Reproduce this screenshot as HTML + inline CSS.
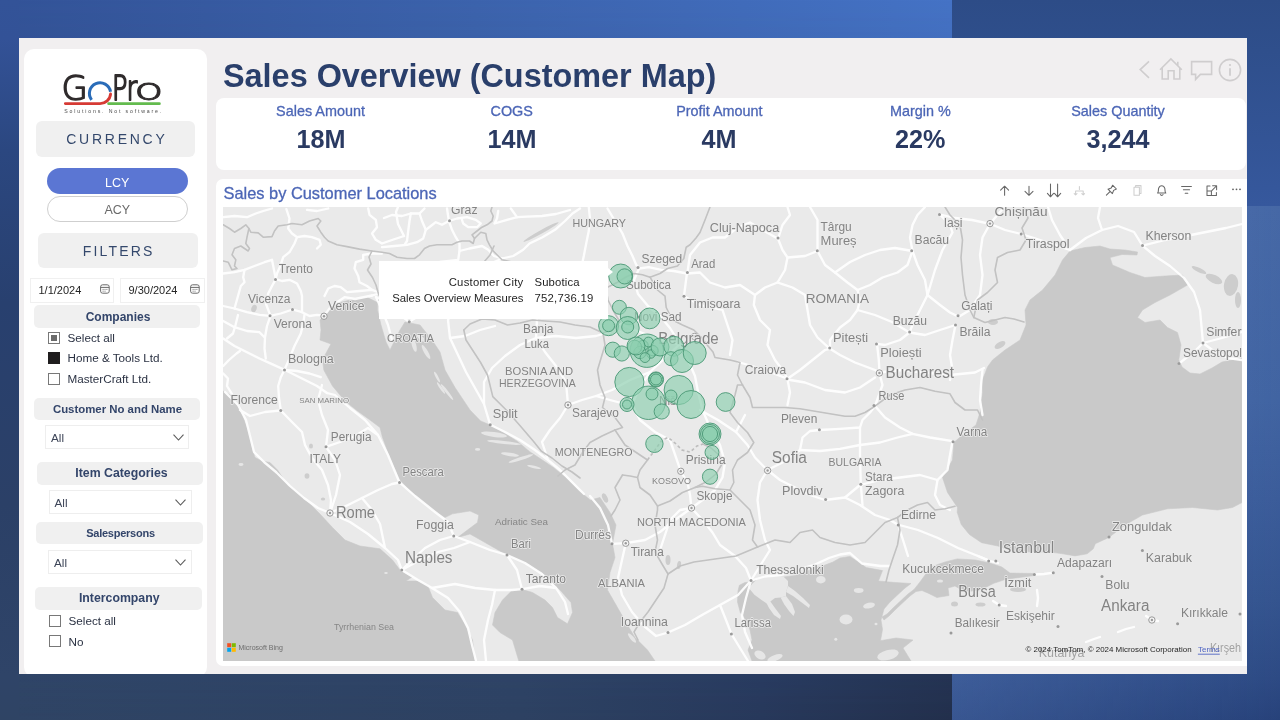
<!DOCTYPE html>
<html lang="en">
<head>
<meta charset="utf-8">
<title>Sales Overview (Customer Map)</title>
<style>
*{box-sizing:border-box;margin:0;padding:0}
html,body{width:1280px;height:720px;overflow:hidden}
body{font-family:"Liberation Sans",sans-serif;position:relative;background:#2c3f63}
.abs{position:absolute}
/* ---------- slide background ---------- */
.bgL{left:0;top:0;width:952px;height:720px;background:linear-gradient(to right,#335398 0%,#3c63ad 50%,#4573c6 100%)}
.bgL2{left:0;top:0;width:952px;height:720px;background:linear-gradient(to right,#2f4464 0%,#2d4161 55%,#27385a 80%,#222f4b 100%);
  -webkit-mask-image:linear-gradient(to bottom,transparent 0%,#000 100%);mask-image:linear-gradient(to bottom,transparent 0%,#000 100%)}
.bgR1{left:952px;top:0;width:328px;height:206px;background:linear-gradient(to bottom,#2d4c87 0%,#2f4f8c 25%,#36589d 100%)}
.bgLs{left:0;top:0;width:19px;height:720px;background:linear-gradient(to bottom,#335398 0%,#335297 5.3%,#2b4780 21%,#28406f 42%,#2b4067 70%,#2f4468 94%,#2f4464 100%)}
.bgR2{left:952px;top:205.5px;width:328px;height:514.5px;background:linear-gradient(to right,rgba(120,160,230,0.21) 0%,rgba(120,160,230,0) 100%),linear-gradient(to bottom,#4668a6 0%,#4164a2 37.8%,#3b5c9a 57%,#34548f 76.7%,#2d4a84 92%,#27427a 100%)}
/* ---------- panel ---------- */
.panel{left:19px;top:38px;width:1228px;height:636px;background:#f1eff0;overflow:hidden;will-change:transform}
.side{left:5px;top:11px;width:183px;height:627.5px;background:#fff;border-radius:10px}
.kpi{left:197px;top:59.5px;width:1029.5px;height:72.6px;background:#fff;border-radius:8px}
.mapcard{left:197px;top:141px;width:1031px;height:486.7px;background:#fff;border-radius:7px 0 0 7px}
.title{left:204px;top:17.5px;font-weight:700;font-size:32.4px;line-height:40px;color:#2a3f6b;white-space:nowrap;letter-spacing:0}
.klabel{-webkit-text-stroke:0.3px #4c66b6;font-size:14.4px;line-height:18px;color:#4c66b6;white-space:nowrap;text-align:center;width:200px;margin-left:-100px;top:64px}
.kval{font-weight:700;font-size:25.2px;line-height:30px;color:#2a3a62;white-space:nowrap;text-align:center;width:200px;margin-left:-100px;top:86px}
.maptitle{-webkit-text-stroke:0.3px #4c66b6;left:204.5px;top:145px;font-size:16.4px;line-height:20px;color:#4c66b6;white-space:nowrap}
.mapwrap{left:204px;top:169px;width:1019px;height:454px;overflow:hidden;background:#e9e9e9}
.mapsvg{display:block}
.tip{left:360px;top:222.5px;width:229px;height:58.5px;background:#fff}
.tip:after{content:"";position:absolute;right:-5px;top:7.8px;border-left:5px solid #fff;border-top:4px solid transparent;border-bottom:4px solid transparent}
.tip div{position:absolute;font-size:11.3px;line-height:14px;color:#1f1f1f;white-space:nowrap}
/* ---------- sidebar ---------- */
.hbox{background:#f0f0f0;border-radius:6px;text-align:center;color:#34486c}
.hbig{font-size:14px;letter-spacing:2.75px;padding-left:2.75px}
.hsm{font-weight:700;font-size:11.4px;color:#33456a;border-radius:5px}
.pill{left:22.5px;width:141.5px;border-radius:13px;text-align:center;font-size:12.5px;line-height:25px;height:25.5px}
.dt{height:25px;border:1px solid #f0f0f0;font-size:11px;line-height:23px;color:#252525;padding-left:8px;background:#fff}
.cb{width:12px;height:12px;border:1px solid #787878;background:#fff}
.ct{font-size:11.7px;line-height:14px;color:#2c3344;white-space:nowrap}
.dd{height:24px;border:1px solid #eeeeee;background:#fff;font-size:11.7px;line-height:23px;color:#3d4558;padding-left:5px}
svg.ico{position:absolute;overflow:visible}
</style>
</head>
<body>
<div class="abs bgL"></div><div class="abs bgL2"></div><div class="abs bgLs"></div>
<div class="abs bgR1"></div><div class="abs bgR2"></div>

<div class="abs panel">
  <!-- sidebar -->
  <div class="abs side">
    <!-- logo -->
    <svg class="ico" style="left:32px;top:17px" width="112" height="54" viewBox="56 66 112 54">
      <g font-family="'DejaVu Sans Light','DejaVu Sans',sans-serif" font-weight="200" font-size="33.9" fill="#2f2b2c" stroke="#2f2b2c" stroke-linejoin="round">
        <text transform="translate(61.4 100.1)" stroke-width="1.5">G</text>
        <text transform="translate(112.1 100.1) scale(0.753 1)" stroke-width="1.9">P</text>
        <text transform="translate(126.5 100.1) scale(0.77 1)" stroke-width="1.9">r</text>
        <text transform="translate(134.1 99.7) scale(1.43 0.9)" stroke-width="1">o</text>
      </g>
      <path d="M91.6 99.8 A10.6 10.6 0 1 1 110.5 91.8" fill="none" stroke="#2a6cb8" stroke-width="3" stroke-linecap="butt"/>
      <path d="M65.3 103.6 H100 A10.6 10.6 0 0 0 110.6 94" fill="none" stroke="#d63a34" stroke-width="2.8" stroke-linecap="round"/>
      <path d="M108.6 103.7 H159.4" fill="none" stroke="#63bb4e" stroke-width="2.7" stroke-linecap="round"/>
      <text x="64.2" y="112.6" font-family="'Liberation Sans', sans-serif" font-size="5.2" fill="#4a4a4a" letter-spacing="1.84">Solutions. Not software.</text>
    </svg>
    <div class="abs hbox hbig" style="left:12px;top:72.3px;width:159px;height:35.4px;line-height:37.6px">CURRENCY</div>
    <div class="abs pill" style="top:119px;background:#5b76d3;color:#fff;line-height:30px">LCY</div>
    <div class="abs pill" style="top:147px;background:#fff;color:#6a6a6a;border:1px solid #cfcfcf;line-height:27.5px">ACY</div>
    <div class="abs hbox hbig" style="left:13.5px;top:183.8px;width:160px;height:35.2px;line-height:37.6px;letter-spacing:2.2px;padding-left:2.2px">FILTERS</div>
    <div class="abs dt" style="left:5.5px;top:228.5px;width:84.5px">1/1/2024</div>
    <div class="abs dt" style="left:95.5px;top:228.5px;width:85px">9/30/2024</div>
    <svg class="ico" style="left:75.5px;top:235px" width="10" height="10" viewBox="0 0 10 10"><rect x="0.6" y="0.8" width="8.6" height="8.4" rx="2" fill="none" stroke="#6a6a6a" stroke-width="1"/><path d="M0.6 3.4H9.2" stroke="#6a6a6a" stroke-width="1"/><path d="M2.6 5.4h1M4.5 5.4h1M6.4 5.4h1M2.6 7.2h1M4.5 7.2h1" stroke="#6a6a6a" stroke-width="0.9"/></svg>
    <svg class="ico" style="left:166px;top:235px" width="10" height="10" viewBox="0 0 10 10"><rect x="0.6" y="0.8" width="8.6" height="8.4" rx="2" fill="none" stroke="#6a6a6a" stroke-width="1"/><path d="M0.6 3.4H9.2" stroke="#6a6a6a" stroke-width="1"/><path d="M2.6 5.4h1M4.5 5.4h1M6.4 5.4h1M2.6 7.2h1M4.5 7.2h1" stroke="#6a6a6a" stroke-width="0.9"/></svg>

    <div class="abs hbox hsm" style="left:9.5px;top:255.5px;width:166px;height:23px;line-height:24px;font-size:12px;padding-left:3px">Companies</div>
    <div class="abs cb" style="left:24px;top:282.5px"><div style="position:absolute;left:2px;top:2px;width:6px;height:6px;background:#6b6b6b"></div></div>
    <div class="abs ct" style="left:43.5px;top:282px">Select all</div>
    <div class="abs cb" style="left:24px;top:302.7px;background:#1f1d1e;border-color:#1f1d1e"></div>
    <div class="abs ct" style="left:43.5px;top:302.4px">Home &amp; Tools Ltd.</div>
    <div class="abs cb" style="left:24px;top:323.5px"></div>
    <div class="abs ct" style="left:43.5px;top:323px">MasterCraft Ltd.</div>

    <div class="abs hbox hsm" style="left:9.5px;top:349px;width:166px;height:22px;line-height:22.5px;padding-left:2px">Customer No and Name</div>
    <div class="abs dd" style="left:21px;top:375.8px;width:143.5px">All</div>
    <svg class="ico" style="left:148.5px;top:385px" width="11" height="7" viewBox="0 0 11 7"><path d="M0.5 0.6 L5.5 6 L10.5 0.6" fill="none" stroke="#5a5a5a" stroke-width="1.1"/></svg>

    <div class="abs hbox hsm" style="left:12.5px;top:413px;width:166px;height:23px;line-height:23.5px;font-size:12.3px;padding-left:4px">Item Categories</div>
    <div class="abs dd" style="left:24.5px;top:441px;width:143px">All</div>
    <svg class="ico" style="left:151px;top:450px" width="11" height="7" viewBox="0 0 11 7"><path d="M0.5 0.6 L5.5 6 L10.5 0.6" fill="none" stroke="#5a5a5a" stroke-width="1.1"/></svg>

    <div class="abs hbox hsm" style="left:11.5px;top:472.5px;width:167px;height:22px;line-height:22.5px;font-size:11px;letter-spacing:-0.25px;padding-left:3px">Salespersons</div>
    <div class="abs dd" style="left:24px;top:500.5px;width:143.5px">All</div>
    <svg class="ico" style="left:151px;top:509.5px" width="11" height="7" viewBox="0 0 11 7"><path d="M0.5 0.6 L5.5 6 L10.5 0.6" fill="none" stroke="#5a5a5a" stroke-width="1.1"/></svg>

    <div class="abs hbox hsm" style="left:10.5px;top:537.5px;width:167.5px;height:23px;line-height:23.5px;font-size:12.3px;padding-left:2px">Intercompany</div>
    <div class="abs cb" style="left:25px;top:565.5px"></div>
    <div class="abs ct" style="left:44.5px;top:565px">Select all</div>
    <div class="abs cb" style="left:25px;top:586px"></div>
    <div class="abs ct" style="left:44.5px;top:585.5px">No</div>
  </div>

  <!-- title + nav icons -->
  <div class="abs title">Sales Overview (Customer Map)</div>
  <svg class="ico" style="left:1115px;top:15px" width="112" height="32" viewBox="1134 53 112 32" fill="none" stroke="#cfcdce" stroke-width="1.6" stroke-linejoin="miter">
    <path d="M1149 61.4 L1140.2 69.6 L1149 77.8"/>
    <path d="M1160 69.8 L1170.9 58.9 L1181.8 69.8 M1162.2 68 V79 H1168.2 V70.8 H1174 V79 H1179.8 V68 M1177.8 65.6 V61.8"/>
    <path d="M1191.6 61.6 H1211.6 V74.4 H1200.4 L1195.6 79.4 V74.4 H1191.6 Z"/>
    <circle cx="1230" cy="70" r="10.6"/>
    <path d="M1230 68.2 V75.8" stroke-width="1.8"/><circle cx="1230" cy="65" r="1.1" fill="#cfcdce" stroke="none"/>
  </svg>

  <!-- KPI card -->
  <div class="abs kpi"></div>
  <div class="abs klabel" style="left:301.5px">Sales Amount</div><div class="abs kval" style="left:302px">18M</div>
  <div class="abs klabel" style="left:492.7px">COGS</div><div class="abs kval" style="left:493px">14M</div>
  <div class="abs klabel" style="left:700.4px">Profit Amount</div><div class="abs kval" style="left:700px">4M</div>
  <div class="abs klabel" style="left:901.3px">Margin %</div><div class="abs kval" style="left:901.3px">22%</div>
  <div class="abs klabel" style="left:1099px">Sales Quantity</div><div class="abs kval" style="left:1099px">3,244</div>

  <!-- map card -->
  <div class="abs mapcard"></div>
  <div class="abs maptitle">Sales by Customer Locations</div>
  <svg class="ico" style="left:971px;top:142px" width="256" height="24" viewBox="990 180 256 24" fill="none" stroke="#666666" stroke-width="1.05" stroke-linecap="round" stroke-linejoin="round">
    <path d="M1004.6 195.3 V186.4 M1000.6 190.2 L1004.6 186.2 L1008.6 190.2"/>
    <path d="M1029 186.2 V195.1 M1025 191.3 L1029 195.3 L1033 191.3"/>
    <path d="M1050.5 184 V196.6 M1047.4 193.4 L1050.5 196.8 L1053.6 193.4 M1057.6 184 V196.6 M1054.5 193.4 L1057.6 196.8 L1060.7 193.4"/>
    <g stroke="#cfcfcf"><path d="M1079.4 186.5 V189.5 M1075.6 194.6 V191 H1083.2 V194.6 M1074.2 193.6 L1075.6 195 L1077 193.6 M1081.8 193.6 L1083.2 195 L1084.6 193.6"/></g>
    <path d="M1112.6 185.2 L1116.4 189 L1113.6 190.4 L1112.4 193.6 L1108 189.2 L1111.2 188 Z M1110 191.6 L1106.4 195.2"/>
    <g stroke="#cfcfcf"><path d="M1134 187.2 H1139.4 V195.2 H1134 Z M1135.6 187 V185.6 H1141 V193.4 H1139.6"/></g>
    <path d="M1157.6 193 C1158.8 191.6 1158.2 189.6 1158.6 188.4 C1159.2 186.6 1160.4 185.8 1161.7 185.8 C1163 185.8 1164.2 186.6 1164.8 188.4 C1165.2 189.6 1164.6 191.6 1165.8 193 Z M1160.4 194.6 C1160.8 195.6 1162.6 195.6 1163 194.6"/>
    <path d="M1181.6 186.4 H1191.4 M1183.4 189.8 H1189.6 M1185.2 193.2 H1187.8"/>
    <path d="M1210 186 H1207 V195.4 H1216.4 V192.4 M1212.6 185.8 H1216.6 V189.8 M1216.4 186 L1211.6 190.8 M1207 191 H1211.4 V195.4"/>
    <g fill="#5f5f5f" stroke="none"><circle cx="1233" cy="189.3" r="0.9"/><circle cx="1236.5" cy="189.3" r="0.9"/><circle cx="1240" cy="189.3" r="0.9"/></g>
  </svg>
  <div class="abs mapwrap">
<svg class="mapsvg" width="1019" height="454" viewBox="223 207 1019 454">
<defs><filter id="soft" x="-2%" y="-2%" width="104%" height="104%"><feGaussianBlur stdDeviation="0.55"/></filter><filter id="soft2" x="-2%" y="-2%" width="104%" height="104%"><feGaussianBlur stdDeviation="0.35"/></filter></defs>
<rect x="223" y="207" width="1019" height="454" fill="#eaeaea"/>
<g fill="#c9c9c9" stroke="#c9c9c9" stroke-width="0.6" stroke-linejoin="round" filter="url(#soft2)">
<path d="M223.0,391.0 L230.0,395.0 L238.8,406.0 L245.0,422.5 L250.0,435.0 L252.5,450.0 L255.0,457.5 L262.0,461.0 L270.0,462.5 L277.5,470.0 L287.5,485.0 L300.0,495.0 L311.0,505.0 L320.0,514.0 L332.5,527.5 L345.0,540.0 L360.0,546.0 L380.0,548.8 L392.5,560.0 L400.0,570.0 L406.0,574.0 L412.0,577.0 L406.0,581.0 L418.0,581.0 L427.5,585.0 L432.5,597.5 L445.0,610.0 L457.5,612.5 L465.0,625.0 L472.5,640.0 L475.0,661.0 L223.0,661.0Z"/>
<path d="M323.8,316.0 L327.5,310.0 L340.0,302.5 L355.0,298.8 L367.5,297.5 L377.5,302.5 L377.5,310.0 L381.0,325.0 L386.0,342.0 L390.0,350.0 L395.0,340.0 L400.0,330.0 L405.0,322.0 L420.0,325.0 L432.0,340.0 L440.0,352.0 L445.0,370.0 L455.0,387.5 L470.0,410.0 L480.6,421.0 L490.4,425.0 L501.0,431.0 L517.2,441.2 L529.4,451.4 L541.6,459.5 L553.8,467.7 L566.0,477.8 L578.0,490.0 L590.3,500.0 L600.0,497.5 L610.0,512.5 L616.0,525.0 L612.5,543.8 L615.0,557.5 L610.0,572.5 L607.5,590.0 L617.5,607.5 L627.5,625.0 L635.0,637.5 L647.5,650.0 L655.0,661.0 L518.8,661.0 L512.5,640.0 L500.0,632.5 L492.5,625.0 L495.0,612.5 L502.5,600.0 L512.5,590.0 L522.0,589.5 L532.5,592.5 L545.0,600.0 L552.5,607.5 L557.5,617.5 L567.5,623.8 L572.5,612.5 L571.0,602.5 L560.0,590.0 L545.0,575.0 L525.0,562.5 L507.0,555.0 L485.0,542.5 L470.0,534.0 L457.5,537.5 L467.5,530.0 L477.5,522.5 L478.8,515.0 L470.0,511.0 L452.5,513.8 L445.0,517.5 L432.5,510.0 L415.0,495.0 L400.0,480.0 L390.0,457.5 L382.5,437.5 L380.0,427.5 L370.0,420.0 L357.5,411.0 L345.0,401.0 L332.5,386.0 L323.8,370.0 L322.5,360.0 L325.0,355.0 L331.0,344.0 L320.0,340.0 L321.0,330.0 L320.0,320.0Z"/>
<path d="M739.4,585.3 L738.0,591.0 L737.5,602.0 L740.3,612.5 L746.0,620.0 L750.0,630.0 L752.0,640.0 L748.0,650.0 L752.0,661.0 L911.0,661.0 L903.0,648.0 L913.0,640.0 L896.0,638.0 L880.5,640.7 L882.5,629.5 L881.0,620.0 L884.0,609.0 L890.0,602.0 L898.0,594.5 L905.0,588.0 L911.0,583.5 L895.0,582.5 L878.4,581.0 L882.5,570.6 L866.2,567.6 L850.0,556.4 L840.0,558.0 L833.0,562.0 L823.7,565.6 L815.0,568.0 L805.0,572.0 L795.0,575.5 L783.4,577.0 L770.0,577.5 L760.0,579.0 L752.0,582.0 L745.0,582.5Z"/>
<path d="M914.0,589.5 L920.0,582.0 L930.8,567.0 L945.0,562.0 L957.2,558.9 L975.5,560.0 L989.7,563.0 L1001.9,567.0 L1010.0,573.1 L1034.4,573.5 L1034.4,575.5 L1006.0,579.2 L993.8,583.3 L981.6,589.4 L969.4,591.4 L960.0,589.0 L955.0,586.0 L948.0,588.0 L949.0,595.5 L936.9,597.5 L928.8,593.4 L922.0,590.5 L916.0,591.5 L910.0,596.0 L903.0,602.5 L895.0,610.0 L889.0,616.0 L884.0,620.0 L882.0,617.0 L887.0,614.0 L893.0,608.0 L901.0,600.5 L908.0,594.0Z"/>
<path d="M982.5,380.0 L987.5,367.0 L992.5,360.0 L1005.0,350.0 L1020.0,340.0 L1026.0,325.0 L1025.0,310.0 L1030.0,300.0 L1042.5,290.0 L1055.0,275.0 L1062.5,260.0 L1070.0,251.0 L1085.0,247.5 L1100.0,246.0 L1110.0,249.0 L1125.0,250.0 L1137.5,252.0 L1137.0,255.0 L1122.0,254.5 L1110.0,257.5 L1112.5,265.0 L1130.0,272.5 L1145.0,277.5 L1165.0,276.0 L1182.5,275.0 L1187.5,285.0 L1170.0,295.0 L1155.0,302.5 L1142.5,310.0 L1137.5,317.5 L1145.0,322.5 L1160.0,320.0 L1167.5,327.5 L1177.5,332.5 L1181.0,345.0 L1178.8,360.0 L1182.0,367.0 L1190.0,373.0 L1200.0,374.0 L1212.0,368.0 L1222.0,362.0 L1242.0,358.0 L1242.0,502.5 L1232.5,507.5 L1217.5,510.0 L1192.5,507.5 L1167.5,508.8 L1142.5,515.0 L1125.0,525.0 L1108.8,537.5 L1095.3,543.7 L1093.3,548.8 L1087.2,553.8 L1075.0,555.9 L1062.8,553.8 L1050.0,552.0 L1030.0,552.0 L1010.0,550.0 L997.8,546.0 L981.6,542.7 L969.4,534.5 L961.2,524.4 L957.2,512.2 L957.5,507.5 L947.5,492.5 L942.5,477.5 L952.5,460.0 L953.8,442.5 L962.5,435.0 L976.0,425.0 L980.0,412.5 L982.5,392.5Z"/>
</g>
<path d="M752.5,583.4 L748.8,588.0 L754.4,594.7 L761.9,600.3 L767.5,604.0 L771.0,601.0 L775.0,598.0 L780.6,597.5 L786.0,596.0 L786.0,592.0 L788.0,586.0 L788.0,581.0 L783.4,576.5 L770.0,577.0 L758.0,578.5Z" fill="#e8e8e8"/>
<path d="M788.0,586.0 L795.0,591.0 L803.0,598.0 L810.0,605.0 L809.0,608.0 L801.0,602.0 L793.0,596.0 L786.0,592.0Z" fill="#e8e8e8"/>
<path d="M780.6,597.5 L786.0,596.0 L792.0,604.0 L795.0,612.0 L793.5,616.0 L789.0,611.0 L784.0,604.0Z" fill="#e8e8e8"/>
<path d="M766.0,602.0 L770.0,601.0 L775.0,608.0 L781.0,616.0 L780.0,619.0 L774.0,615.0 L769.0,608.0Z" fill="#e8e8e8"/>
<ellipse cx="858.7" cy="590.5" rx="4.8" ry="2.4" fill="#e6e6e6" transform="rotate(0 858.7 590.5)"/>
<ellipse cx="869" cy="605.6" rx="6" ry="2.8" fill="#e6e6e6" transform="rotate(-12 869 605.6)"/>
<ellipse cx="846" cy="619.5" rx="6.5" ry="5" fill="#e6e6e6" transform="rotate(0 846 619.5)"/>
<ellipse cx="835.8" cy="639.3" rx="1.5" ry="1.5" fill="#e6e6e6" transform="rotate(0 835.8 639.3)"/>
<ellipse cx="876" cy="624" rx="1.5" ry="1.2" fill="#e6e6e6" transform="rotate(0 876 624)"/>
<ellipse cx="888" cy="655" rx="11" ry="5" fill="#e6e6e6" transform="rotate(-15 888 655)"/>
<ellipse cx="940" cy="581" rx="3" ry="1.6" fill="#e6e6e6" transform="rotate(0 940 581)"/>
<ellipse cx="820.8" cy="579.7" rx="4.8" ry="3.7" fill="#e6e6e6" transform="rotate(0 820.8 579.7)"/>
<ellipse cx="494" cy="434.5" rx="13" ry="2.4" fill="#e6e6e6" transform="rotate(8 494 434.5)"/>
<ellipse cx="504" cy="442.5" rx="17" ry="1.6" fill="#e6e6e6" transform="rotate(6 504 442.5)"/>
<ellipse cx="510" cy="454.5" rx="9" ry="1.8" fill="#e6e6e6" transform="rotate(8 510 454.5)"/>
<ellipse cx="534" cy="467" rx="7" ry="1.3" fill="#e6e6e6" transform="rotate(14 534 467)"/>
<ellipse cx="477.6" cy="449.4" rx="2.6" ry="1.4" fill="#e6e6e6" transform="rotate(0 477.6 449.4)"/>
<ellipse cx="521" cy="458.5" rx="13" ry="1.6" fill="#e6e6e6" transform="rotate(-18 521 458.5)"/>
<ellipse cx="447" cy="392" rx="10" ry="1.4" fill="#e6e6e6" transform="rotate(52 447 392)"/>
<ellipse cx="441" cy="388" rx="7" ry="1.2" fill="#e6e6e6" transform="rotate(55 441 388)"/>
<ellipse cx="437" cy="377" rx="6" ry="1.3" fill="#e6e6e6" transform="rotate(62 437 377)"/>
<ellipse cx="426" cy="352" rx="8" ry="2" fill="#e6e6e6" transform="rotate(60 426 352)"/>
<ellipse cx="414" cy="345" rx="7" ry="2.2" fill="#e6e6e6" transform="rotate(75 414 345)"/>
<ellipse cx="421" cy="338" rx="5" ry="2" fill="#e6e6e6" transform="rotate(40 421 338)"/>
<ellipse cx="241" cy="464.5" rx="2.5" ry="1.4" fill="#e6e6e6" transform="rotate(0 241 464.5)"/>
<ellipse cx="632" cy="638" rx="6" ry="1.8" fill="#e6e6e6" transform="rotate(50 632 638)"/>
<ellipse cx="386" cy="573" rx="1.8" ry="1" fill="#e6e6e6" transform="rotate(0 386 573)"/>
<ellipse cx="760" cy="655" rx="6" ry="4" fill="#e6e6e6" transform="rotate(30 760 655)"/>
<ellipse cx="775" cy="658" rx="8" ry="3" fill="#e6e6e6" transform="rotate(-20 775 658)"/>
<ellipse cx="541" cy="232" rx="20" ry="1.8" fill="#cdcdcd" transform="rotate(-29 541 232)"/>
<ellipse cx="1018" cy="589.5" rx="8" ry="2.6" fill="#cdcdcd" transform="rotate(0 1018 589.5)"/>
<ellipse cx="980.5" cy="604.6" rx="5" ry="2" fill="#cdcdcd" transform="rotate(0 980.5 604.6)"/>
<ellipse cx="954.5" cy="604" rx="3.5" ry="2.5" fill="#cdcdcd" transform="rotate(0 954.5 604)"/>
<ellipse cx="254" cy="308.5" rx="2.6" ry="3.8" fill="#cdcdcd" transform="rotate(20 254 308.5)"/>
<ellipse cx="605" cy="498" rx="2.5" ry="5" fill="#cdcdcd" transform="rotate(-25 605 498)"/>
<ellipse cx="668" cy="560" rx="2.5" ry="5" fill="#cdcdcd" transform="rotate(0 668 560)"/>
<ellipse cx="679" cy="565" rx="2" ry="4" fill="#cdcdcd" transform="rotate(10 679 565)"/>
<ellipse cx="1231" cy="285" rx="7" ry="11" fill="#cdcdcd" transform="rotate(10 1231 285)"/>
<ellipse cx="1214" cy="279" rx="9" ry="4" fill="#cdcdcd" transform="rotate(25 1214 279)"/>
<ellipse cx="1199" cy="270" rx="8" ry="2.2" fill="#cdcdcd" transform="rotate(25 1199 270)"/>
<ellipse cx="1238" cy="300" rx="3" ry="8" fill="#cdcdcd" transform="rotate(0 1238 300)"/>
<ellipse cx="311" cy="446" rx="2" ry="2.6" fill="#cdcdcd" transform="rotate(0 311 446)"/>
<ellipse cx="323" cy="499" rx="2.2" ry="1.6" fill="#cdcdcd" transform="rotate(0 323 499)"/>
<ellipse cx="307" cy="476" rx="2.4" ry="2.8" fill="#cdcdcd" transform="rotate(0 307 476)"/>
<ellipse cx="993" cy="322" rx="5" ry="3" fill="#cdcdcd" transform="rotate(0 993 322)"/>
<ellipse cx="1000" cy="345" rx="6" ry="3" fill="#cdcdcd" transform="rotate(-30 1000 345)"/>
<g fill="none" stroke="#ffffff" stroke-width="2.3" stroke-linejoin="round" stroke-linecap="round" opacity="0.92" filter="url(#soft)">
<path d="M286.4,209.1 L289.5,218.5 L288.2,228.5 L292.0,233.5 L297.0,237.2 L294.5,243.5 L289.5,252.2 L283.2,257.2 L280.8,264.8 L277.0,273.5 L275.8,279.1 L272.0,286.0 L268.2,293.5 L266.0,304.0 L270.5,315.8"/>
<path d="M297.0,237.2 L304.5,236.0 L312.0,237.2 L319.5,239.8 L320.8,244.8 L317.0,248.5"/>
<path d="M223.2,273.5 L234.5,272.2 L244.5,269.8 L254.5,266.0 L264.5,262.2 L272.0,259.8 L273.2,266.0 L275.8,279.1"/>
<path d="M244.5,269.8 L243.2,277.2 L244.5,282.2 L240.8,286.0 L238.0,296.0 L234.5,308.5"/>
<path d="M275.8,279.1 L282.0,281.0 L289.5,279.8 L297.0,283.5 L300.8,291.0 L302.0,296.0 L302.0,312.2"/>
<path d="M223.2,217.2 L234.5,216.0 L247.0,217.2 L255.8,213.5 L263.2,211.0 L272.0,208.5"/>
<path d="M307.0,209.8 L317.0,211.0 L328.2,208.5"/>
<path d="M368.2,208.5 L369.5,214.8 L375.8,219.8 L377.0,227.2 L372.0,233.5 L375.8,239.8 L382.0,243.5 L392.0,240.0 L404.0,236.0"/>
<path d="M404.0,236.0 L398.0,224.0 L396.0,212.0 L398.0,207.0"/>
<path d="M382.0,253.5 L372.0,253.5 L363.2,254.8 L363.2,259.8 L355.8,262.2 L354.5,268.5 L358.2,276.0 L359.5,282.2 L367.0,286.0 L372.0,289.8"/>
<path d="M324.5,296.0 L328.2,288.5 L334.5,286.0 L340.8,287.2 L347.0,292.2 L359.5,291.0 L372.0,289.8 L382.0,293.5"/>
<path d="M223.2,338.5 L234.5,346.0 L247.0,352.2 L259.5,358.5 L272.0,364.1 L284.5,369.8 L297.0,376.0 L309.5,382.2 L317.0,386.0 L327.0,393.0"/>
<path d="M223.2,306.0 L234.5,308.5 L247.0,312.2 L259.5,314.8 L270.5,315.8 L280.8,313.5 L292.6,309.5 L302.0,312.2 L309.5,316.0 L317.0,314.8 L324.2,315.6"/>
<path d="M270.5,315.8 L267.0,326.0 L265.0,337.2 L264.5,348.5 L265.8,358.5"/>
<path d="M284.5,369.8 L289.5,358.5 L294.5,346.0 L300.8,333.5 L303.2,323.5 L304.5,314.8"/>
<path d="M284.5,369.8 L280.8,377.2 L278.2,386.0 L279.0,398.0 L280.8,410.5"/>
<path d="M284.5,369.8 L297.0,371.0 L309.5,373.5 L320.8,377.2"/>
<path d="M324.2,315.6 L329.5,308.5 L337.0,302.2 L344.5,297.2 L355.0,299.0 L372.0,295.5"/>
<path d="M223.2,366.0 L229.0,360.0 L236.5,353.5 L240.0,351.0"/>
<path d="M223.2,373.5 L228.0,378.5 L227.0,386.0 L232.0,394.0"/>
<path d="M238.0,315.0 L235.5,325.0 L233.0,333.5 L227.0,338.5"/>
<path d="M223.2,321.0 L234.5,327.2 L247.0,331.0 L259.5,332.2 L264.5,337.2"/>
<path d="M327.0,393.0 L335.0,395.0 L350.0,408.0 L365.0,420.0 L378.0,435.0 L388.0,455.0 L399.5,482.5 L415.0,496.0 L435.0,512.0 L448.0,522.0 L453.8,536.0 L470.0,542.0 L490.0,550.0 L507.0,555.0 L517.0,570.0 L522.0,589.2"/>
<path d="M225.0,392.0 L238.0,405.0 L246.0,420.0 L250.0,436.0 L254.0,452.0 L264.0,462.0 L276.0,472.0"/>
<path d="M280.8,410.5 L265.0,412.0 L250.0,416.0 L240.0,410.0"/>
<path d="M280.8,410.5 L292.0,422.0 L302.0,432.0 L305.0,445.0 L312.0,458.0 L322.0,470.0 L328.0,485.0 L331.0,500.0 L330.0,513.0"/>
<path d="M322.0,385.0 L318.0,400.0 L322.0,415.0 L328.0,430.0 L326.0,446.8 L335.0,460.0 L340.0,475.0 L336.0,495.0 L330.0,513.0"/>
<path d="M326.0,446.8 L340.0,442.0 L355.0,436.0 L368.0,428.0 L378.0,435.0"/>
<path d="M276.0,472.0 L290.0,486.0 L304.0,498.0 L318.0,508.0 L330.0,513.0"/>
<path d="M330.0,513.0 L350.0,522.0 L368.0,534.0 L385.0,548.0 L398.0,560.0 L401.8,570.0"/>
<path d="M330.0,513.0 L348.0,505.0 L362.0,498.0 L378.0,490.0 L392.0,484.0 L399.5,482.5"/>
<path d="M362.0,498.0 L372.0,510.0 L380.0,524.0 L385.0,548.0"/>
<path d="M401.8,570.0 L420.0,560.0 L438.0,552.0 L454.0,548.0 L470.0,542.0"/>
<path d="M401.8,570.0 L418.0,580.0 L432.0,588.0 L448.0,598.0 L460.0,612.0 L468.0,628.0 L472.0,645.0 L476.0,661.0"/>
<path d="M432.0,588.0 L455.0,584.0 L475.0,588.0 L495.0,590.0 L512.0,590.0 L522.0,589.2"/>
<path d="M453.8,536.0 L440.0,540.0 L425.0,548.0 L412.0,560.0 L401.8,570.0"/>
<path d="M507.0,555.0 L525.0,563.0 L542.0,574.0 L556.0,588.0 L565.0,602.0 L568.0,614.0"/>
<path d="M522.0,589.2 L540.0,586.0 L556.0,588.0"/>
<path d="M495.0,590.0 L492.0,605.0 L488.0,620.0 L484.0,640.0 L486.0,661.0"/>
<path d="M372.0,295.5 L392.0,290.0 L408.0,284.0 L425.0,282.0 L442.0,278.0 L458.0,275.0 L470.0,272.0"/>
<path d="M408.0,284.0 L425.0,270.0 L440.0,262.0 L458.2,259.8 L459.5,251.0 L459.5,243.5 L455.8,237.2 L452.0,229.8 L448.9,221.0 L447.0,208.5"/>
<path d="M448.9,221.0 L442.0,224.8 L435.8,222.2 L430.8,226.0 L425.8,229.8 L423.2,238.5 L417.0,242.2 L407.0,244.8 L394.5,246.0 L382.0,247.2"/>
<path d="M425.8,229.8 L422.0,221.0 L419.5,213.5 L424.5,208.5"/>
<path d="M410.8,213.5 L409.5,221.0 L408.2,231.0 L407.0,241.0 L404.5,244.8"/>
<path d="M419.5,213.5 L410.8,213.5 L402.0,216.0 L392.0,215.0 L384.0,218.0"/>
<path d="M448.9,221.0 L457.0,218.5 L467.0,217.2 L475.8,219.8 L480.8,223.5 L477.0,227.2 L468.2,227.2 L463.2,223.5 L462.0,219.8"/>
<path d="M498.2,211.0 L497.0,218.5 L494.5,223.5 L507.0,219.8 L517.0,217.2 L527.0,216.6 L542.0,216.0 L556.0,214.0 L570.0,210.0"/>
<path d="M510.8,208.5 L517.0,217.2"/>
<path d="M502.0,258.5 L513.2,256.0 L523.2,249.8 L529.5,243.5 L542.5,237.2 L555.0,229.8 L565.0,221.0 L572.5,213.5 L580.0,208.5"/>
<path d="M459.5,251.0 L469.5,248.5 L482.0,246.0 L488.2,249.8 L494.0,256.0 L502.0,258.5"/>
<path d="M470.0,272.0 L482.0,268.0 L492.0,263.0 L502.0,258.5"/>
<path d="M588.8,207.2 L590.0,218.5 L588.8,231.0 L586.2,243.5 L583.8,256.0 L582.5,262.0 L584.0,275.0 L590.0,288.0 L600.0,300.0 L610.0,320.0"/>
<path d="M607.5,208.5 L615.0,221.0 L622.5,233.5 L627.5,246.0 L632.5,256.0 L636.2,264.8 L639.1,268.5"/>
<path d="M639.1,268.5 L648.8,267.2 L661.2,269.8 L673.8,271.0 L686.9,273.5"/>
<path d="M639.1,268.5 L634.0,280.0 L638.0,294.0 L648.0,306.0 L660.0,316.0 L670.0,328.0 L680.0,344.0"/>
<path d="M686.9,273.5 L684.0,296.2 L700.0,305.0 L722.5,310.0 L727.5,325.0 L732.5,340.0 L730.0,355.0"/>
<path d="M686.9,273.5 L700.0,272.5 L710.0,282.5 L725.0,287.5 L740.0,285.0 L755.0,295.0"/>
<path d="M530.0,290.0 L535.0,305.0 L537.0,320.0 L536.0,338.0 L545.0,352.0 L556.0,366.0 L566.0,382.0 L568.0,405.0"/>
<path d="M568.0,405.0 L560.0,418.0 L550.0,430.0 L542.0,442.0 L548.0,460.0"/>
<path d="M568.0,405.0 L582.0,400.0 L596.0,396.0 L610.0,400.0 L625.0,404.0"/>
<path d="M536.0,338.0 L556.0,336.0 L576.0,338.0 L596.0,336.0 L610.0,332.0"/>
<path d="M470.0,272.0 L462.0,290.0 L455.0,305.0 L448.0,320.0 L450.0,338.0 L458.0,355.0 L466.0,372.0 L475.0,388.0 L484.0,404.0 L490.2,424.8"/>
<path d="M490.2,424.8 L505.0,432.0 L520.0,440.0 L535.0,450.0 L548.0,460.0 L560.0,470.0 L572.0,482.0 L584.0,494.0"/>
<path d="M409.2,321.8 L425.0,312.0 L440.0,300.0 L455.0,288.0 L470.0,272.0"/>
<path d="M376.0,297.0 L382.0,310.0 L388.0,325.0 L392.0,340.0"/>
<path d="M409.2,321.8 L396.0,312.0 L385.0,303.0 L376.0,297.0"/>
<path d="M536.0,338.0 L520.0,345.0 L505.0,356.0 L492.0,368.0 L484.0,382.0 L484.0,404.0"/>
<path d="M450.0,338.0 L465.0,336.0 L480.0,330.0 L495.0,326.0"/>
<path d="M540.0,268.0 L536.0,280.0 L530.0,290.0"/>
<path d="M470.0,272.0 L490.0,278.0 L510.0,284.0 L530.0,290.0 L550.0,298.0 L570.0,306.0 L590.0,314.0 L610.0,320.0 L630.0,328.0 L650.0,336.0 L668.0,342.0 L680.0,344.0"/>
<path d="M680.0,344.0 L688.0,360.0 L695.0,376.0 L698.0,392.0 L702.5,410.0 L710.0,427.5 L720.0,445.0 L725.0,462.5 L722.5,477.5 L715.0,490.0 L702.5,500.0 L691.5,508.0"/>
<path d="M680.8,471.3 L687.5,482.5 L690.0,495.0 L691.5,508.0"/>
<path d="M691.5,508.0 L680.0,510.0 L670.0,520.0 L665.0,535.0 L660.0,550.0"/>
<path d="M691.5,508.0 L702.5,520.0 L712.5,532.5 L720.0,545.0 L735.0,556.0 L746.0,568.0 L751.0,580.5"/>
<path d="M700.0,410.0 L718.0,420.0 L736.0,432.0 L745.0,415.0"/>
<path d="M736.0,432.0 L747.5,445.0 L755.0,457.5 L767.6,470.5"/>
<path d="M680.0,344.0 L665.0,358.0 L650.0,372.0 L640.0,388.0 L632.0,404.0 L640.0,420.0 L655.0,432.0 L670.0,440.0 L680.8,471.3"/>
<path d="M650.0,372.0 L630.0,380.0 L612.0,390.0 L596.0,396.0"/>
<path d="M691.5,508.0 L675.0,520.0 L660.0,532.0 L645.0,540.0 L625.8,543.2 L612.0,543.8"/>
<path d="M625.8,543.2 L622.0,560.0 L618.0,578.0 L622.0,595.0 L632.0,612.0 L644.0,626.0 L656.0,636.0 L668.0,632.5"/>
<path d="M668.0,632.5 L685.0,625.0 L702.0,615.0 L720.0,605.0 L738.0,595.0 L751.0,580.5"/>
<path d="M720.0,605.0 L726.0,620.0 L731.4,633.9 L740.0,648.0 L748.0,661.0"/>
<path d="M751.0,580.5 L746.0,598.0 L742.0,615.0 L745.0,632.0 L752.0,648.0"/>
<path d="M751.0,580.5 L765.0,576.5 L781.0,575.0 L800.0,569.0 L815.0,564.5 L829.0,558.0 L840.0,554.5 L850.0,553.0 L862.0,563.5 L880.5,566.0 L890.0,566.0"/>
<path d="M612.0,543.8 L608.0,525.0 L600.0,508.0 L590.0,496.0"/>
<path d="M778.0,238.8 L782.5,250.0 L787.5,257.5 L805.0,256.0 L817.5,251.0"/>
<path d="M787.5,257.5 L785.0,270.0 L777.5,282.5 L765.0,287.5 L755.0,295.0 L753.8,305.0 L760.0,320.0 L770.0,330.0 L767.5,345.0 L775.0,360.0 L782.5,370.0 L787.5,378.8"/>
<path d="M777.5,282.5 L792.5,287.5 L805.0,295.0 L807.5,310.0 L810.0,325.0 L817.5,337.5 L830.0,348.8 L840.0,355.0 L855.0,362.5 L875.0,370.0 L879.5,372.5"/>
<path d="M817.5,251.0 L825.0,265.0 L835.0,272.5 L847.5,282.5 L857.5,290.0 L860.0,300.0 L857.5,310.0 L850.0,320.0 L840.0,327.5 L830.0,340.0 L830.0,348.8"/>
<path d="M857.5,290.0 L870.0,285.0 L882.5,277.5 L897.5,272.5 L907.5,265.0 L912.5,251.0"/>
<path d="M912.5,251.0 L910.0,237.5 L912.5,225.0 L917.5,215.0 L925.0,207.0"/>
<path d="M912.5,251.0 L917.5,265.0 L925.0,280.0 L927.5,295.0 L920.0,310.0 L912.5,325.0 L909.5,332.5 L900.0,340.0 L885.0,345.0 L877.0,343.8 L878.8,360.0 L879.5,372.5"/>
<path d="M927.5,295.0 L940.0,305.0 L950.0,312.5 L957.5,316.2"/>
<path d="M940.0,214.5 L950.0,225.0 L952.5,232.5 L942.5,250.0 L935.0,270.0 L927.5,295.0"/>
<path d="M909.5,332.5 L925.0,335.0 L940.0,330.0 L955.5,325.0"/>
<path d="M879.5,372.5 L900.0,370.0 L925.0,372.5 L950.0,375.0 L975.0,372.5 L984.0,368.0"/>
<path d="M955.5,325.0 L952.5,340.0 L950.0,355.0 L952.5,370.0 L950.0,380.0"/>
<path d="M990.0,223.8 L982.5,237.5 L980.0,255.0 L982.5,275.0 L980.0,295.0 L970.0,310.0 L960.0,316.0"/>
<path d="M778.0,238.8 L762.5,230.0 L750.0,222.5 L737.5,227.5 L725.0,237.5 L712.5,237.5 L700.0,242.5 L690.0,255.0 L687.4,272.6"/>
<path d="M778.0,238.8 L782.5,225.0 L790.0,215.0 L787.5,207.0"/>
<path d="M810.0,207.0 L817.5,220.0 L817.5,251.0"/>
<path d="M787.5,378.8 L800.0,370.0 L812.5,360.0 L825.0,350.0 L830.0,348.8"/>
<path d="M787.5,379.5 L805.0,382.5 L825.0,390.0 L845.0,392.5 L860.0,387.5 L875.0,377.5"/>
<path d="M787.5,379.5 L790.0,392.5 L787.5,405.0"/>
<path d="M787.5,378.8 L770.0,372.0 L752.0,366.0 L738.0,362.0"/>
<path d="M879.5,373.8 L882.5,385.0 L875.0,406.0"/>
<path d="M982.5,370.0 L981.0,385.0 L980.0,400.0 L982.5,415.0"/>
<path d="M857.5,310.0 L875.0,315.0 L892.0,322.0 L909.5,332.5"/>
<path d="M835.0,272.5 L850.0,262.0 L865.0,255.0 L880.0,250.0 L895.0,248.0 L912.5,251.0"/>
<path d="M767.5,470.0 L782.5,462.5 L800.0,450.0 L802.5,437.5 L810.0,431.0 L820.0,430.0 L840.0,428.8 L860.0,427.5 L862.5,420.0 L870.0,412.5 L875.0,406.0"/>
<path d="M800.0,450.0 L820.0,451.0 L840.0,448.8 L860.0,445.0 L880.0,442.5 L897.5,437.5 L912.5,433.8 L930.0,437.5 L952.5,441.2"/>
<path d="M875.0,406.0 L885.0,417.5 L900.0,427.5 L912.5,433.8"/>
<path d="M767.5,470.0 L780.0,480.0 L795.0,487.5 L810.0,495.0 L825.0,500.0 L845.0,497.5 L860.0,485.0 L880.0,480.0 L900.0,477.5 L920.0,475.0 L937.5,480.0"/>
<path d="M845.0,497.5 L860.0,505.0 L875.0,515.0 L890.0,520.0 L897.5,524.5 L918.0,530.0 L938.0,538.0 L958.0,548.0 L978.0,556.0 L990.0,561.0"/>
<path d="M860.0,427.5 L860.0,445.0 L860.0,455.0 L860.8,484.2 L862.5,505.0"/>
<path d="M767.5,470.0 L760.0,482.5 L757.5,500.0 L760.0,520.0 L765.0,540.0 L770.0,550.0 L760.0,566.0 L751.0,580.5"/>
<path d="M952.5,441.2 L950.0,455.0 L947.5,470.0 L937.5,480.0 L935.0,495.0 L940.0,505.0 L950.0,510.0"/>
<path d="M978.0,556.0 L990.0,561.0 L998.0,563.0"/>
<path d="M1034.4,574.5 L1044.0,574.0 L1053.3,572.7"/>
<path d="M1037.0,590.0 L1038.0,598.0 L1037.0,606.0"/>
<path d="M993.0,601.0 L999.2,605.0 L1006.0,606.0"/>
<path d="M1146.0,616.0 L1151.9,620.0 L1158.0,621.0"/>
<path d="M1118.0,632.0 L1126.0,629.0 L1134.0,627.0"/>
<path d="M1086.0,642.0 L1094.0,639.0 L1100.0,637.0"/>
<path d="M898.2,525.0 L903.0,540.0 L908.0,556.0"/>
<path d="M990.0,223.8 L1005.0,230.0 L1021.2,234.0 L1040.0,240.0 L1058.0,246.0 L1070.0,250.0"/>
<path d="M1070.0,250.0 L1086.0,238.0 L1102.0,230.0 L1118.0,226.0 L1134.0,232.0 L1142.5,245.6"/>
<path d="M1142.5,245.6 L1165.0,240.0 L1186.0,236.0 L1206.0,232.0 L1226.0,228.0 L1242.0,224.0"/>
<path d="M1142.5,245.6 L1155.0,256.0 L1170.0,266.0 L1184.0,278.0 L1194.0,292.0 L1200.0,310.0 L1203.0,343.0"/>
<path d="M1203.0,343.0 L1194.0,352.0 L1186.0,358.0 L1179.0,363.6"/>
<path d="M1203.0,343.0 L1222.0,338.0 L1242.0,332.0"/>
<path d="M1203.0,343.0 L1215.0,352.0 L1228.0,358.0 L1242.0,360.0"/>
<path d="M940.0,214.5 L955.0,218.0 L972.0,220.0 L990.0,223.8"/>
<path d="M990.0,223.8 L1000.0,212.0 L1005.0,207.0"/>
<path d="M1070.0,250.0 L1060.0,235.0 L1052.0,220.0 L1048.0,207.0"/>
<path d="M1102.0,230.0 L1098.0,218.0 L1100.0,207.0"/>
</g>
<g fill="none" stroke="#c2c2c2" stroke-width="1.6" stroke-linejoin="round" stroke-linecap="round" filter="url(#soft)">
<path d="M223.2,224.8 L229.5,228.5 L234.5,232.2 L240.8,228.5 L245.8,224.8 L248.9,228.5 L250.8,232.2 L258.2,232.9 L263.2,237.2 L272.0,236.6 L274.5,231.0 L278.2,226.0 L287.0,224.8 L292.0,223.5 L302.0,224.8 L309.5,221.0 L318.2,218.5 L320.8,221.0 L317.0,226.0 L320.8,232.2 L324.5,237.2 L328.2,241.0 L337.0,244.8 L347.0,246.6 L359.5,249.1 L372.0,251.0 L382.0,252.2 L389.5,253.5 L397.0,257.2 L407.0,258.5 L414.5,258.5 L419.5,254.8 L424.5,248.5 L429.5,246.0 L437.0,244.8 L444.5,244.8 L452.0,244.8 L457.0,242.2 L462.0,241.0 L469.5,241.0 L473.2,243.5 L474.5,238.5 L472.0,234.8 L477.0,231.0 L482.0,227.2 L487.0,224.8 L492.0,221.0 L493.2,216.0 L490.8,211.0 L492.0,207.0"/>
<path d="M474.5,238.5 L480.8,232.2 L485.8,233.5 L487.0,239.8 L489.5,244.8 L493.2,251.0 L498.2,256.0 L502.0,259.8 L512.0,262.0"/>
<path d="M248.9,228.5 L247.0,237.2 L245.8,243.5 L249.5,248.5 L248.2,251.0 L240.8,246.0 L234.5,248.5 L232.0,254.8 L235.8,259.8 L234.5,266.0 L237.0,268.5 L232.0,269.8 L228.2,262.2 L223.2,261.0"/>
<path d="M372.0,251.0 L369.0,257.0 L371.0,264.0 L367.5,270.0 L372.5,277.5 L376.0,285.0 L378.8,295.0"/>
<path d="M379.0,300.0 L390.0,305.0 L400.0,300.0 L412.0,304.0 L425.0,300.0 L438.0,297.0 L450.0,292.0 L462.0,286.0 L470.0,278.0 L480.0,272.0 L484.0,262.0 L490.0,255.0 L494.0,246.0"/>
<path d="M512.0,262.0 L520.0,262.0 L535.0,268.0 L550.0,276.0 L565.0,284.0 L580.0,288.0 L595.0,290.0 L606.0,288.0"/>
<path d="M606.0,288.0 L618.0,282.0 L626.0,277.0 L633.8,273.5 L642.5,274.8 L650.0,277.2"/>
<path d="M650.0,277.2 L660.0,273.5 L667.5,268.5 L677.5,266.0 L683.8,258.5 L686.2,247.2 L690.0,244.8 L696.0,238.0 L700.0,232.5 L705.0,220.0 L710.0,207.0"/>
<path d="M650.0,277.2 L657.5,290.0 L665.0,296.2 L666.2,307.5 L672.5,320.0 L682.5,325.0 L693.8,330.0 L702.0,338.0 L708.0,346.0 L713.0,352.0 L715.0,357.5 L730.0,360.0 L740.0,362.5 L737.5,375.0 L742.5,385.0"/>
<path d="M606.0,288.0 L608.0,300.0 L614.0,312.0 L620.0,322.0 L612.0,330.0 L603.0,333.0"/>
<path d="M463.8,330.0 L470.0,324.0 L482.0,319.0 L495.0,320.0 L507.5,325.0 L520.0,323.0 L532.5,320.0 L545.0,321.0 L560.0,322.0 L575.0,325.0 L590.0,327.0 L603.0,333.0"/>
<path d="M463.8,330.0 L466.0,340.0 L472.5,350.0 L480.6,362.5 L487.5,375.0 L492.8,396.6 L507.0,410.8 L521.2,427.0 L533.4,441.2 L541.6,451.4 L552.0,458.0 L562.0,466.0 L572.0,472.0 L580.0,478.0"/>
<path d="M603.0,333.0 L605.0,345.0 L600.5,360.0 L597.5,370.0 L600.0,385.0 L605.0,397.5 L602.5,407.5 L615.0,417.5 L622.5,427.5 L615.0,430.0"/>
<path d="M615.0,430.0 L602.0,436.0 L590.0,442.5 L582.5,452.5 L575.0,465.0 L565.0,470.0 L558.0,476.0"/>
<path d="M615.0,430.0 L625.0,445.0 L640.0,455.0 L647.5,460.0 L640.0,470.0 L637.5,477.5 L630.0,476.0 L622.5,475.0"/>
<path d="M622.5,475.0 L615.0,487.5 L620.0,500.0 L615.0,510.0 L611.0,516.0"/>
<path d="M637.5,477.5 L640.0,487.5 L650.0,495.0 L657.5,506.0 L670.0,501.0 L682.5,492.5 L695.0,487.5 L702.5,486.2 L715.0,488.8 L730.0,490.0"/>
<path d="M695.0,487.5 L706.0,482.0 L716.0,474.0 L722.0,464.0 L719.0,455.0 L711.0,448.0 L703.0,444.0"/>
<path d="M742.5,385.0 L737.5,385.0 L735.0,395.0 L730.0,412.5 L737.5,422.5 L747.5,432.5 L753.8,442.5 L747.5,452.5 L737.5,460.0 L732.5,470.0 L733.8,482.5 L730.0,490.0"/>
<path d="M742.5,385.0 L750.0,397.5 L752.5,407.5 L770.0,407.5 L785.0,407.5 L800.0,408.8 L815.0,411.2 L830.0,413.8 L845.0,416.2 L855.0,416.2 L865.0,412.5 L875.0,406.2 L890.0,395.0 L905.0,390.0 L920.0,387.5 L935.0,391.2 L950.0,393.8 L955.0,402.5 L965.0,410.0 L977.5,410.0 L982.5,420.0"/>
<path d="M730.0,490.0 L740.0,500.0 L750.0,510.0 L755.0,525.0 L752.5,540.0 L757.5,547.0"/>
<path d="M757.5,547.0 L748.0,551.0 L736.0,556.0 L722.0,558.0 L708.0,560.0 L694.0,562.0 L680.0,566.0 L668.0,574.0 L662.0,564.0 L655.0,552.0 L657.5,540.0 L655.0,525.0 L657.5,510.0 L657.5,506.0"/>
<path d="M668.0,574.0 L664.0,588.0 L656.0,600.0 L648.0,612.0 L640.0,622.0 L634.0,632.0 L638.0,640.0"/>
<path d="M757.5,547.0 L775.0,540.0 L790.0,542.5 L800.0,532.5 L812.5,530.0 L820.0,537.5 L835.0,542.5 L850.0,545.0 L865.0,542.5 L875.0,532.5 L885.0,522.5 L897.5,517.5"/>
<path d="M897.5,517.5 L907.5,510.0 L917.5,505.0 L927.5,502.5 L935.0,510.0 L945.0,508.8 L955.0,506.2"/>
<path d="M897.5,517.5 L900.0,530.0 L897.5,545.0 L893.0,558.0 L889.0,570.0 L886.0,582.0"/>
<path d="M945.0,207.0 L950.0,215.0 L960.0,225.0 L962.5,240.0 L961.0,257.5 L962.5,275.0 L965.0,295.0 L970.0,310.0 L973.8,317.5"/>
<path d="M973.8,317.5 L977.5,300.0 L987.5,292.5 L997.5,282.5 L995.0,270.0 L997.5,257.5 L1007.5,252.5 L1020.0,250.0 L1026.0,240.0 L1022.0,228.0 L1028.0,218.0 L1024.0,207.0"/>
<path d="M973.8,317.5 L985.0,322.5 L995.0,320.0 L1005.0,317.5 L1014.0,319.0 L1024.0,322.0"/>
</g>
<path d="M647.5,460 L655,450 L662,440 L668,437.5 L675,443 L682,450 L690,452 L697,446 L703,444" fill="none" stroke="#bdbdbd" stroke-width="1.6" stroke-dasharray="3 2.5"/>
<g fill="#9a9a9a">
<circle cx="449.5" cy="220.75" r="1.5"/>
<circle cx="275.5" cy="279.5" r="1.5"/>
<circle cx="292.5" cy="309.5" r="1.5"/>
<circle cx="270" cy="315.75" r="1.5"/>
<circle cx="284.5" cy="370" r="1.5"/>
<circle cx="409.25" cy="321.75" r="1.5"/>
<circle cx="280.75" cy="410.5" r="1.5"/>
<circle cx="326" cy="446.75" r="1.5"/>
<circle cx="399.5" cy="482.5" r="1.5"/>
<circle cx="453.75" cy="536" r="1.5"/>
<circle cx="490.2" cy="424.8" r="1.5"/>
<circle cx="507" cy="555" r="1.5"/>
<circle cx="522" cy="589.25" r="1.5"/>
<circle cx="401.75" cy="570" r="1.5"/>
<circle cx="612" cy="543.75" r="1.5"/>
<circle cx="668" cy="632.5" r="1.5"/>
<circle cx="751" cy="580.5" r="1.5"/>
<circle cx="731.4" cy="633.9" r="1.5"/>
<circle cx="898.2" cy="525" r="1.5"/>
<circle cx="988.7" cy="561" r="1.5"/>
<circle cx="995.8" cy="561" r="1.5"/>
<circle cx="1053.3" cy="572.7" r="1.5"/>
<circle cx="1034.4" cy="574.5" r="1.5"/>
<circle cx="999.2" cy="605" r="1.5"/>
<circle cx="1102" cy="576.4" r="1.5"/>
<circle cx="1058" cy="626.4" r="1.5"/>
<circle cx="951" cy="633" r="1.5"/>
<circle cx="1109" cy="537.1" r="1.5"/>
<circle cx="939.5" cy="214.4" r="1.5"/>
<circle cx="1021.2" cy="234" r="1.5"/>
<circle cx="1142.5" cy="245.6" r="1.5"/>
<circle cx="958" cy="315.75" r="1.5"/>
<circle cx="955.5" cy="325" r="1.5"/>
<circle cx="1203" cy="343" r="1.5"/>
<circle cx="1179" cy="363.6" r="1.5"/>
<circle cx="953" cy="441.75" r="1.5"/>
<circle cx="638" cy="267.4" r="1.5"/>
<circle cx="687.4" cy="272.6" r="1.5"/>
<circle cx="684" cy="296.2" r="1.5"/>
<circle cx="778" cy="238" r="1.5"/>
<circle cx="817.3" cy="250.8" r="1.5"/>
<circle cx="911.7" cy="250.8" r="1.5"/>
<circle cx="829.7" cy="348" r="1.5"/>
<circle cx="876.5" cy="344" r="1.5"/>
<circle cx="909.6" cy="332" r="1.5"/>
<circle cx="787" cy="378.7" r="1.5"/>
<circle cx="874" cy="405.6" r="1.5"/>
<circle cx="819.4" cy="429.7" r="1.5"/>
<circle cx="860.8" cy="484.2" r="1.5"/>
<circle cx="825.6" cy="499.5" r="1.5"/>
<circle cx="1142.4" cy="550.4" r="1.5"/>
<circle cx="1177.6" cy="623.7" r="1.5"/>
<circle cx="1240" cy="614" r="1.5"/>
</g>
<g fill="#f4f4f4" stroke="#9a9a9a" stroke-width="1">
<circle cx="330" cy="513" r="3.2"/>
<circle cx="324" cy="316.25" r="3.2"/>
<circle cx="691.5" cy="508" r="3.2"/>
<circle cx="625.75" cy="543.25" r="3.2"/>
<circle cx="568" cy="405" r="3.2"/>
<circle cx="680.8" cy="471.3" r="3.2"/>
<circle cx="767.6" cy="470.5" r="3.2"/>
<circle cx="990" cy="223.6" r="3.2"/>
<circle cx="879.4" cy="373" r="3.2"/>
<circle cx="1151.9" cy="620" r="3.2"/>
<circle cx="694.5" cy="336.5" r="3.2"/>
</g><g fill="#9a9a9a">
<circle cx="330" cy="513" r="1.2"/>
<circle cx="324" cy="316.25" r="1.2"/>
<circle cx="691.5" cy="508" r="1.2"/>
<circle cx="625.75" cy="543.25" r="1.2"/>
<circle cx="568" cy="405" r="1.2"/>
<circle cx="680.8" cy="471.3" r="1.2"/>
<circle cx="767.6" cy="470.5" r="1.2"/>
<circle cx="990" cy="223.6" r="1.2"/>
<circle cx="879.4" cy="373" r="1.2"/>
<circle cx="1151.9" cy="620" r="1.2"/>
<circle cx="694.5" cy="336.5" r="1.2"/>
</g>
<g font-family="'Liberation Sans', sans-serif" fill="#838383" stroke="#ececec" stroke-width="1.6" paint-order="stroke" stroke-linejoin="round">
<text x="451" y="213.75" font-size="12.3" textLength="26.5" lengthAdjust="spacingAndGlyphs">Graz</text>
<text x="572.5" y="227" font-size="11" textLength="53.5" lengthAdjust="spacingAndGlyphs">HUNGARY</text>
<text x="709.8" y="232" font-size="12.3" textLength="69.4" lengthAdjust="spacingAndGlyphs">Cluj-Napoca</text>
<text x="820.6" y="231" font-size="12.3" textLength="31.1" lengthAdjust="spacingAndGlyphs">Târgu</text>
<text x="820.6" y="244.5" font-size="12.3" textLength="36.0" lengthAdjust="spacingAndGlyphs">Mureș</text>
<text x="943.75" y="227" font-size="12.3" textLength="18.8" lengthAdjust="spacingAndGlyphs">Iași</text>
<text x="994.5" y="216.25" font-size="13.3" textLength="53.0" lengthAdjust="spacingAndGlyphs">Chișinău</text>
<text x="914.6" y="244" font-size="12.3" textLength="34.4" lengthAdjust="spacingAndGlyphs">Bacău</text>
<text x="1025.75" y="247.5" font-size="12.3" textLength="43.8" lengthAdjust="spacingAndGlyphs">Tiraspol</text>
<text x="1145.5" y="239.5" font-size="12.3" textLength="45.8" lengthAdjust="spacingAndGlyphs">Kherson</text>
<text x="278.75" y="272.5" font-size="12.3" textLength="34.2" lengthAdjust="spacingAndGlyphs">Trento</text>
<text x="641.6" y="262.5" font-size="12.3" textLength="40.6" lengthAdjust="spacingAndGlyphs">Szeged</text>
<text x="691.25" y="268" font-size="12.3" textLength="24.0" lengthAdjust="spacingAndGlyphs">Arad</text>
<text x="626" y="289" font-size="12.3" textLength="45.0" lengthAdjust="spacingAndGlyphs">Subotica</text>
<text x="686.7" y="308.3" font-size="12.3" textLength="53.8" lengthAdjust="spacingAndGlyphs">Timișoara</text>
<text x="805.7" y="303.4" font-size="12.8" textLength="63.3" lengthAdjust="spacingAndGlyphs">ROMANIA</text>
<text x="961.25" y="310" font-size="12.3" textLength="31.2" lengthAdjust="spacingAndGlyphs">Galați</text>
<text x="248" y="302.5" font-size="12.3" textLength="42.5" lengthAdjust="spacingAndGlyphs">Vicenza</text>
<text x="328" y="310" font-size="12.3" textLength="36.5" lengthAdjust="spacingAndGlyphs">Venice</text>
<text x="273.75" y="328" font-size="12.3" textLength="38.2" lengthAdjust="spacingAndGlyphs">Verona</text>
<text x="634" y="320.5" font-size="12.3" textLength="47.5" lengthAdjust="spacingAndGlyphs">Novi Sad</text>
<text x="892.7" y="325" font-size="12.3" textLength="34.3" lengthAdjust="spacingAndGlyphs">Buzău</text>
<text x="959.5" y="336.25" font-size="12.3" textLength="31.0" lengthAdjust="spacingAndGlyphs">Brăila</text>
<text x="1206.25" y="335.75" font-size="12.3" textLength="35.2" lengthAdjust="spacingAndGlyphs">Simfer</text>
<text x="387" y="342" font-size="11" textLength="46.8" lengthAdjust="spacingAndGlyphs">CROATIA</text>
<text x="523" y="333.4" font-size="12.3" textLength="30.4" lengthAdjust="spacingAndGlyphs">Banja</text>
<text x="524.6" y="347.7" font-size="12.3" textLength="24.4" lengthAdjust="spacingAndGlyphs">Luka</text>
<text x="658.3" y="344.4" font-size="16" textLength="60.4" lengthAdjust="spacingAndGlyphs">Belgrade</text>
<text x="833" y="341.9" font-size="12.3" textLength="35.2" lengthAdjust="spacingAndGlyphs">Pitești</text>
<text x="880.2" y="357.2" font-size="12.3" textLength="41.5" lengthAdjust="spacingAndGlyphs">Ploiești</text>
<text x="1183" y="357" font-size="12.3" textLength="59.0" lengthAdjust="spacingAndGlyphs">Sevastopol</text>
<text x="288" y="362.5" font-size="12.3" textLength="45.8" lengthAdjust="spacingAndGlyphs">Bologna</text>
<text x="505" y="375.2" font-size="11" textLength="68.0" lengthAdjust="spacingAndGlyphs">BOSNIA AND</text>
<text x="499" y="387" font-size="11" textLength="76.7" lengthAdjust="spacingAndGlyphs">HERZEGOVINA</text>
<text x="744.8" y="373.75" font-size="12.3" textLength="41.5" lengthAdjust="spacingAndGlyphs">Craiova</text>
<text x="885.6" y="378" font-size="16" textLength="68.4" lengthAdjust="spacingAndGlyphs">Bucharest</text>
<text x="230.6" y="403.75" font-size="12.3" textLength="47.2" lengthAdjust="spacingAndGlyphs">Florence</text>
<text x="299.3" y="402.8" font-size="7.6" textLength="49.7" lengthAdjust="spacingAndGlyphs">SAN MARINO</text>
<text x="878.6" y="399.8" font-size="12.3" textLength="25.7" lengthAdjust="spacingAndGlyphs">Ruse</text>
<text x="492.8" y="418.4" font-size="12.3" textLength="24.8" lengthAdjust="spacingAndGlyphs">Split</text>
<text x="572" y="417" font-size="12.3" textLength="46.8" lengthAdjust="spacingAndGlyphs">Sarajevo</text>
<text x="780.9" y="423.4" font-size="12.3" textLength="36.4" lengthAdjust="spacingAndGlyphs">Pleven</text>
<text x="956.6" y="435.8" font-size="12.3" textLength="30.7" lengthAdjust="spacingAndGlyphs">Varna</text>
<text x="330.8" y="441.1" font-size="12.3" textLength="40.7" lengthAdjust="spacingAndGlyphs">Perugia</text>
<text x="309.5" y="462.5" font-size="12.8" textLength="31.5" lengthAdjust="spacingAndGlyphs">ITALY</text>
<text x="554.8" y="455.5" font-size="11" textLength="77.8" lengthAdjust="spacingAndGlyphs">MONTENEGRO</text>
<text x="659" y="405" font-size="12.3" textLength="17.0" lengthAdjust="spacingAndGlyphs">Niš</text>
<text x="771.75" y="462.65" font-size="16" textLength="35.2" lengthAdjust="spacingAndGlyphs">Sofia</text>
<text x="828.5" y="466.4" font-size="11" textLength="53.0" lengthAdjust="spacingAndGlyphs">BULGARIA</text>
<text x="685.7" y="464.2" font-size="12.3" textLength="39.9" lengthAdjust="spacingAndGlyphs">Pristina</text>
<text x="865" y="480.9" font-size="12.3" textLength="27.7" lengthAdjust="spacingAndGlyphs">Stara</text>
<text x="865" y="495.4" font-size="12.3" textLength="39.3" lengthAdjust="spacingAndGlyphs">Zagora</text>
<text x="652" y="484.4" font-size="9.4" textLength="39.1" lengthAdjust="spacingAndGlyphs">KOSOVO</text>
<text x="402.5" y="476" font-size="12.3" textLength="41.2" lengthAdjust="spacingAndGlyphs">Pescara</text>
<text x="782" y="494.5" font-size="12.3" textLength="40.7" lengthAdjust="spacingAndGlyphs">Plovdiv</text>
<text x="696.5" y="499.5" font-size="12.3" textLength="36.0" lengthAdjust="spacingAndGlyphs">Skopje</text>
<text x="336" y="517.5" font-size="16" textLength="39.0" lengthAdjust="spacingAndGlyphs">Rome</text>
<text x="901" y="519.2" font-size="12.3" textLength="35.0" lengthAdjust="spacingAndGlyphs">Edirne</text>
<text x="637" y="525.75" font-size="11" textLength="109.0" lengthAdjust="spacingAndGlyphs">NORTH MACEDONIA</text>
<text x="416" y="528.75" font-size="12.3" textLength="37.8" lengthAdjust="spacingAndGlyphs">Foggia</text>
<text x="495" y="525" font-size="8.6" textLength="53.0" lengthAdjust="spacingAndGlyphs" stroke="none" fill="#868686">Adriatic Sea</text>
<text x="575" y="538.75" font-size="12.3" textLength="36.0" lengthAdjust="spacingAndGlyphs">Durrës</text>
<text x="1112" y="531.4" font-size="12.3" textLength="60.0" lengthAdjust="spacingAndGlyphs">Zonguldak</text>
<text x="511" y="548.2" font-size="12.3" textLength="20.0" lengthAdjust="spacingAndGlyphs">Bari</text>
<text x="630.75" y="556" font-size="12.3" textLength="33.0" lengthAdjust="spacingAndGlyphs">Tirana</text>
<text x="998.8" y="553.2" font-size="16" textLength="55.5" lengthAdjust="spacingAndGlyphs">Istanbul</text>
<text x="405" y="562.5" font-size="16" textLength="47.5" lengthAdjust="spacingAndGlyphs">Naples</text>
<text x="1057" y="567" font-size="12.3" textLength="55.0" lengthAdjust="spacingAndGlyphs">Adapazarı</text>
<text x="1145.7" y="562" font-size="12.3" textLength="46.3" lengthAdjust="spacingAndGlyphs">Karabuk</text>
<text x="756.2" y="574" font-size="12.3" textLength="67.4" lengthAdjust="spacingAndGlyphs">Thessaloniki</text>
<text x="902.3" y="573" font-size="12.3" textLength="81.7" lengthAdjust="spacingAndGlyphs">Kucukcekmece</text>
<text x="525.75" y="583" font-size="12.3" textLength="40.2" lengthAdjust="spacingAndGlyphs">Taranto</text>
<text x="598" y="586.75" font-size="11" textLength="47.0" lengthAdjust="spacingAndGlyphs">ALBANIA</text>
<text x="1004.3" y="587.3" font-size="12.3" textLength="27.0" lengthAdjust="spacingAndGlyphs">İzmit</text>
<text x="1105.3" y="589" font-size="12.3" textLength="24.3" lengthAdjust="spacingAndGlyphs">Bolu</text>
<text x="958.2" y="597" font-size="16" textLength="37.6" lengthAdjust="spacingAndGlyphs">Bursa</text>
<text x="620.75" y="625.5" font-size="12.3" textLength="47.2" lengthAdjust="spacingAndGlyphs">Ioannina</text>
<text x="734.5" y="627" font-size="12.3" textLength="36.5" lengthAdjust="spacingAndGlyphs">Larissa</text>
<text x="954.75" y="627" font-size="12.3" textLength="45.0" lengthAdjust="spacingAndGlyphs">Balıkesir</text>
<text x="1006" y="619.8" font-size="12.3" textLength="48.7" lengthAdjust="spacingAndGlyphs">Eskişehir</text>
<text x="1101" y="611.3" font-size="16" textLength="48.4" lengthAdjust="spacingAndGlyphs">Ankara</text>
<text x="1180.9" y="616.7" font-size="12.3" textLength="47.1" lengthAdjust="spacingAndGlyphs">Kırıkkale</text>
<text x="334" y="629.5" font-size="8.6" textLength="60.0" lengthAdjust="spacingAndGlyphs" stroke="none" fill="#868686">Tyrrhenian Sea</text>
<text x="1038.8" y="656.9" font-size="12.3" textLength="45.6" lengthAdjust="spacingAndGlyphs" fill="#a2a2a2">Kütahya</text>
<text x="1209.9" y="651.9" font-size="13.3" textLength="31.1" lengthAdjust="spacingAndGlyphs" fill="#a2a2a2">Kırşeh</text>
</g>
<g fill="#8bcfae" fill-opacity="0.66" stroke="#4a9875" stroke-width="1" stroke-opacity="0.9">
<circle cx="620.7" cy="276" r="12"/>
<circle cx="624.6" cy="276.4" r="7.6"/>
<circle cx="619.4" cy="307.3" r="7"/>
<circle cx="629" cy="316" r="8.7"/>
<circle cx="649.6" cy="318.4" r="10.4"/>
<circle cx="608.6" cy="325.7" r="10"/>
<circle cx="608.6" cy="325.7" r="6"/>
<circle cx="627.7" cy="328" r="11.5"/>
<circle cx="627.7" cy="327" r="6"/>
<circle cx="612.8" cy="349.7" r="7.6"/>
<circle cx="621.8" cy="353.5" r="7.6"/>
<circle cx="646.8" cy="350.7" r="16.7"/>
<circle cx="643" cy="345.5" r="5.2"/>
<circle cx="653" cy="350.7" r="5.2"/>
<circle cx="640" cy="352.5" r="6.2"/>
<circle cx="648.5" cy="342" r="4.9"/>
<circle cx="651" cy="354" r="4.2"/>
<circle cx="645" cy="357.6" r="4.9"/>
<circle cx="634.6" cy="347.2" r="7"/>
<circle cx="636" cy="346" r="9"/>
<circle cx="660" cy="347" r="9"/>
<circle cx="673.75" cy="346.25" r="10"/>
<circle cx="671" cy="358.7" r="7"/>
<circle cx="682" cy="361" r="11.5"/>
<circle cx="694.7" cy="353" r="11.5"/>
<circle cx="629.4" cy="382" r="14.6"/>
<circle cx="656" cy="379.5" r="7.6"/>
<circle cx="656" cy="379.5" r="7"/>
<circle cx="656" cy="379.5" r="5.5"/>
<circle cx="678.7" cy="390" r="14.6"/>
<circle cx="648.5" cy="402.8" r="16.7"/>
<circle cx="652" cy="394" r="6"/>
<circle cx="671" cy="396" r="6"/>
<circle cx="691" cy="404.5" r="14"/>
<circle cx="627" cy="404.5" r="7"/>
<circle cx="627" cy="404.5" r="4.5"/>
<circle cx="661.7" cy="411.5" r="7.6"/>
<circle cx="725.6" cy="402" r="9.4"/>
<circle cx="710" cy="434" r="11"/>
<circle cx="710" cy="434" r="9.5"/>
<circle cx="710" cy="434" r="7.6"/>
<circle cx="654.4" cy="443.8" r="8.7"/>
<circle cx="712" cy="452.4" r="7"/>
<circle cx="710" cy="476.7" r="7.6"/>
</g>
<g><rect x="227.2" y="643.2" width="4" height="4" fill="#f25022"/><rect x="231.8" y="643.2" width="4" height="4" fill="#7fba00"/><rect x="227.2" y="647.8" width="4" height="4" fill="#00a4ef"/><rect x="231.8" y="647.8" width="4" height="4" fill="#ffb900"/><text x="238.4" y="650" font-family="'Liberation Sans', sans-serif" font-size="7.8" fill="#6d6d6d" textLength="44.5" lengthAdjust="spacingAndGlyphs">Microsoft Bing</text></g>
<text x="1025.4" y="652.4" font-family="'Liberation Sans', sans-serif" font-size="8" fill="#262626" textLength="166.2" lengthAdjust="spacingAndGlyphs">© 2024 TomTom, © 2024 Microsoft Corporation</text>
<text x="1197.9" y="652.4" font-family="'Liberation Sans', sans-serif" font-size="8" fill="#5166c4" textLength="21.9" lengthAdjust="spacingAndGlyphs">Terms</text><path d="M1197.9 654.2 H1219.8" stroke="#5166c4" stroke-width="0.9"/>
</svg>
  </div>
  <!-- tooltip -->
  <div class="abs tip">
    <div style="right:84.5px;top:14.5px;letter-spacing:0.25px">Customer City</div><div style="left:155.5px;top:14.5px;letter-spacing:0.15px">Subotica</div>
    <div style="right:84.5px;top:30.5px">Sales Overview Measures</div><div style="left:155.5px;top:30.5px;letter-spacing:0.25px">752,736.19</div>
  </div>
</div>
</body>
</html>
